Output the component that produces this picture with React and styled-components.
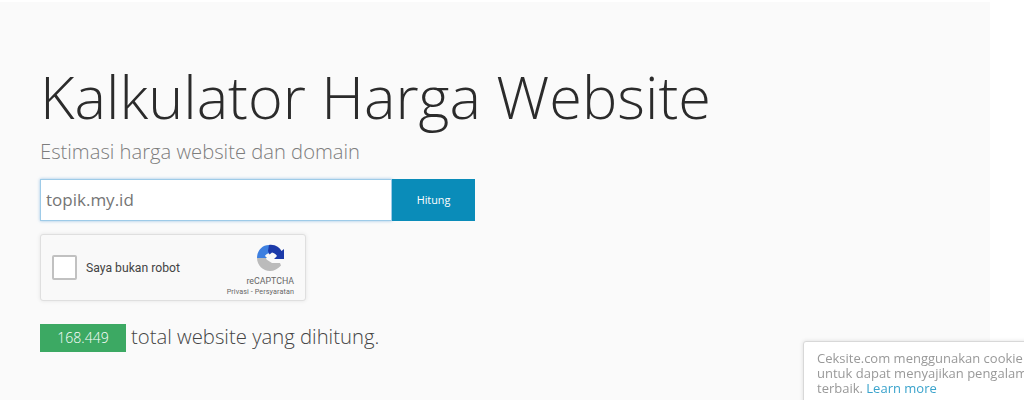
import React from 'react';
import styled, { createGlobalStyle } from 'styled-components';

const GlobalStyle = createGlobalStyle`
    html, body {
        margin: 0;
        padding: 0;
        height: 100%;
        background: #fff;
        overflow: hidden;
    }
    body {
        font-family: 'Open Sans', sans-serif;
    }
`;

const Page = styled.div`
    width: 1024px;
    height: 400px;
    background: #fff;
`;

const Hero = styled.section`
    width: 990px;
    height: 398px;
    margin-top: 2px;
    padding-left: 40px;
    padding-top: 58px;
    box-sizing: border-box;
    background: #fafafa;
`;

const Title = styled.h1`
    margin: 0;
    font-size: 59.4px;
    line-height: 72px;
    font-weight: 300;
    color: #2b2b2b;
`;

const Lead = styled.p`
    margin: 4px 0 0;
    font-size: 20.2px;
    line-height: 30px;
    font-weight: 300;
    color: #7d7d7d;
`;

const SearchForm = styled.form`
    display: flex;
    width: 435px;
    height: 42px;
    margin-top: 13px;
`;

const DomainInput = styled.input`
    flex: 1;
    min-width: 0;
    box-sizing: border-box;
    height: 42px;
    padding: 0 5px 1px;
    border: 1px solid #9ecbe8;
    background: #fff;
    box-shadow: 0 0 3px rgba(90, 160, 215, 0.6);
    outline: none;
    font-family: 'Open Sans', sans-serif;
    font-size: 17px;
    color: #757575;
`;

const SubmitButton = styled.button`
    width: 83px;
    height: 42px;
    border: 0;
    padding: 0 0 2px;
    background: #0a8cb9;
    color: #fff;
    font-family: 'Open Sans', sans-serif;
    font-size: 10.8px;
`;

const Captcha = styled.div`
    display: flex;
    align-items: center;
    box-sizing: border-box;
    width: 266px;
    height: 67px;
    margin-top: 13px;
    padding: 0 11px;
    background: #f9f9f9;
    border: 1px solid #dfdfdf;
    border-radius: 3px;
    box-shadow: 0 0 4px rgba(0, 0, 0, 0.09);
`;

const CheckBox = styled.span`
    flex: none;
    box-sizing: border-box;
    width: 25px;
    height: 25px;
    background: #fff;
    border: 2px solid #c1c1c1;
    border-radius: 2px;
`;

const CaptchaLabel = styled.span`
    flex: 1;
    margin-left: 9px;
    font-family: Roboto, sans-serif;
    font-size: 12.2px;
    color: #444;
`;

const CaptchaBrand = styled.div`
    display: flex;
    flex-direction: column;
    align-items: flex-end;
    padding-top: 5px;
    font-family: Roboto, sans-serif;
    color: #666;
`;

const LogoSlot = styled.div`
    display: flex;
    margin-right: 10px;
`;

const BrandName = styled.span`
    margin-top: 3px;
    font-size: 8.8px;
    line-height: 12px;
`;

const BrandLinks = styled.span`
    font-size: 7.2px;
    line-height: 10px;
    letter-spacing: 0.1px;
    white-space: nowrap;
`;

const StatRow = styled.div`
    display: flex;
    align-items: center;
    height: 28px;
    margin-top: 23px;
`;

const CountBadge = styled.span`
    width: 86px;
    height: 28px;
    line-height: 28px;
    text-align: center;
    background: #3ca963;
    color: #fff;
    font-size: 14px;
    font-weight: 300;
`;

const StatText = styled.span`
    margin: 0 0 4px 5px;
    font-size: 20.3px;
    font-weight: 300;
    color: #444;
`;

const CookieNotice = styled.div`
    position: fixed;
    left: 803px;
    top: 341px;
    width: 300px;
    height: 80px;
    box-sizing: border-box;
    padding: 9px 13px;
    background: #fff;
    border: 1px solid #d8d8d8;
    border-radius: 3px;
    box-shadow: 0 0 4px rgba(0, 0, 0, 0.12);
    font-size: 13px;
    line-height: 15px;
    color: #999;
    white-space: nowrap;
`;

const LearnMore = styled.a`
    color: #3aa3cc;
    text-decoration: none;
`;

const CaptchaLogo = () => (
    <svg width="28" height="28" viewBox="0 0 28 28">
        <path d="M1 14C1 7 6 1 13 1H15V9C12 9 10 10 9 12L11 14z" fill="#3d7fe0" />
        <path d="M13 1C19 0 24 4 25.500 7L28 5V15H18L21 12C20 10 18 9 16 8.500L13.500 10.500 12 7z" fill="#1c3aa9" />
        <path d="M1 14H10C10.500 15.500 11 16 12 16.500L16 19H24L25 21.500C22 25 18 27 14 27 7 27 1 21 1 14z" fill="#bbb" />
    </svg>
);

const App = () => {
    return (
        <Page>
            <GlobalStyle />
            <Hero>
                <Title>Kalkulator Harga Website</Title>
                <Lead>Estimasi harga website dan domain</Lead>
                <SearchForm onSubmit={(e) => e.preventDefault()}>
                    <DomainInput defaultValue="topik.my.id" />
                    <SubmitButton>Hitung</SubmitButton>
                </SearchForm>
                <Captcha>
                    <CheckBox />
                    <CaptchaLabel>Saya bukan robot</CaptchaLabel>
                    <CaptchaBrand>
                        <LogoSlot><CaptchaLogo /></LogoSlot>
                        <BrandName>reCAPTCHA</BrandName>
                        <BrandLinks>Privasi - Persyaratan</BrandLinks>
                    </CaptchaBrand>
                </Captcha>
                <StatRow>
                    <CountBadge>168.449</CountBadge>
                    <StatText>total website yang dihitung.</StatText>
                </StatRow>
            </Hero>
            <CookieNotice>
                Ceksite.com menggunakan cookie<br />
                untuk dapat menyajikan pengalaman<br />
                terbaik. <LearnMore href="#">Learn more</LearnMore>
            </CookieNotice>
        </Page>
    );
};

export default App;
